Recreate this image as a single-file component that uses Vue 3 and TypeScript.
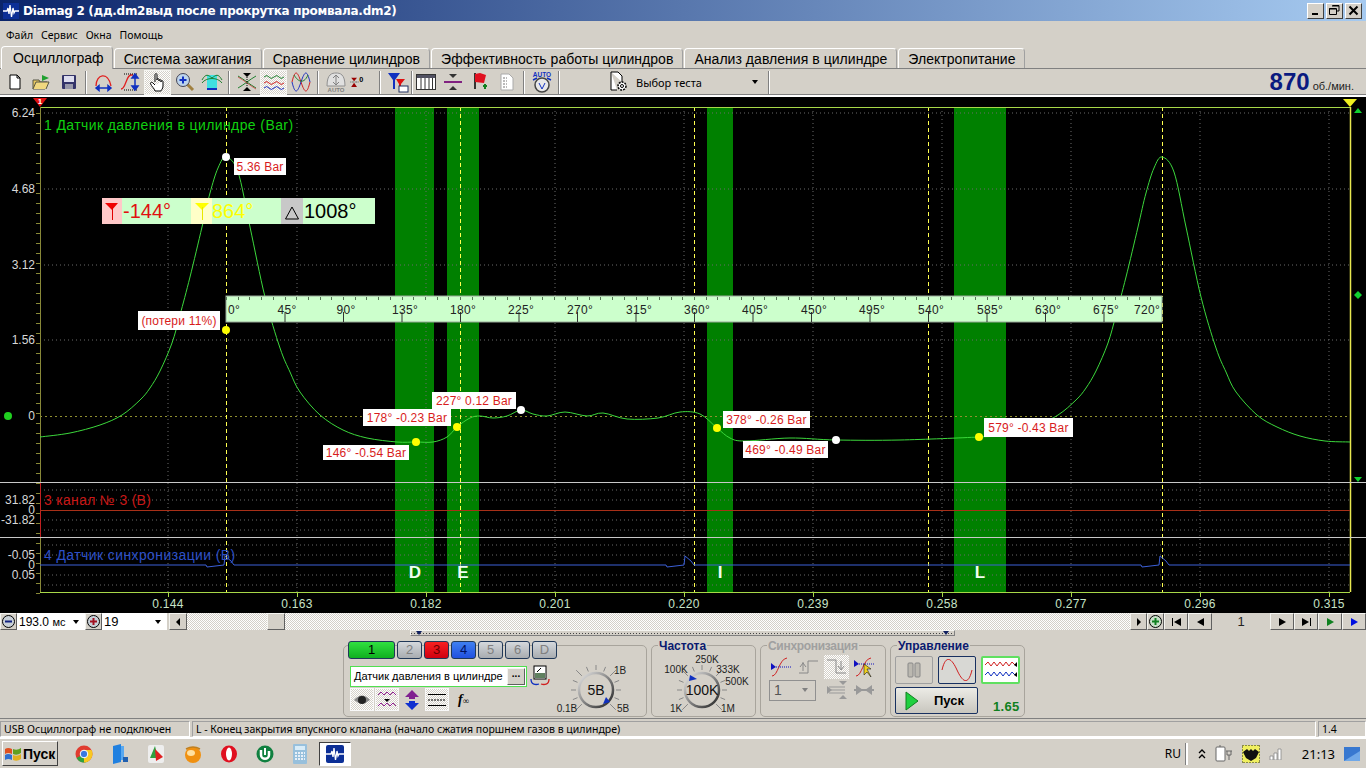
<script setup lang="ts">
interface Chip { x: number; y: number; w: number; h: number; text: string }
interface Dot { x: number; y: number; fill: string }
interface Knob { cx: number; cy: number; r: number; ticks: { x1: number; y1: number; x2: number; y2: number }[] }

const pressure: [number, number][] = [
  [40, 437], [70, 433], [100, 425], [122, 415], [140, 400], [150, 388], [160, 371], [172, 343], [180, 315], [190, 277], [202, 227], [210, 193], [218, 168], [226, 157],
  [238, 172], [250, 227], [265, 297], [280, 348], [290, 372], [300, 392], [320, 415], [343, 430], [367, 438], [397, 442], [416, 442], [433, 442], [447, 437],
  [457, 427], [470, 418], [480, 416], [493, 418], [507, 416], [521, 410], [533, 414], [547, 416], [565, 412], [587, 416], [603, 413], [627, 419],
  [658, 418], [680, 412], [700, 414], [717, 428], [730, 438], [745, 441], [790, 438], [836, 440], [900, 440], [979, 437], [1000, 435], [1036, 425],
  [1058, 415], [1076, 400], [1086, 388], [1096, 371], [1108, 343], [1116, 315], [1126, 277], [1138, 227], [1146, 193], [1154, 168], [1162, 157], [1174, 172], [1186, 227],
  [1201, 297], [1216, 348], [1226, 372], [1236, 392], [1257, 415], [1277, 427], [1300, 436], [1325, 441], [1350, 442]
]

function smooth(pts: [number, number][]): string {
  let d = `M${pts[0][0]} ${pts[0][1]}`
  for (let i = 0; i < pts.length - 1; i++) {
    const p0 = pts[Math.max(0, i - 1)]
    const p1 = pts[i]
    const p2 = pts[i + 1]
    const p3 = pts[Math.min(pts.length - 1, i + 2)]
    const c1x = p1[0] + (p2[0] - p0[0]) / 6
    const c1y = p1[1] + (p2[1] - p0[1]) / 6
    const c2x = p2[0] - (p3[0] - p1[0]) / 6
    const c2y = p2[1] - (p3[1] - p1[1]) / 6
    d += ` C${c1x.toFixed(1)} ${c1y.toFixed(1)} ${c2x.toFixed(1)} ${c2y.toFixed(1)} ${p2[0]} ${p2[1]}`
  }
  return d
}
const curve = smooth(pressure)

const syncPath = (() => {
  const blip = (x: number) => `${x - 19},565 ${x - 18},567 ${x - 1},565 ${x},556 ${x + 6},561 ${x + 9},565`
  return `40,565 ${blip(225)} ${blip(685)} ${blip(1160)} 1350,565`
})()

const gridX = [168, 297, 426, 555, 684, 813, 942, 1071, 1200, 1329]
const timeLabels = ['0.144', '0.163', '0.182', '0.201', '0.220', '0.239', '0.258', '0.277', '0.296', '0.315']
const gridY = [113, 189, 265, 340, 490, 500, 520, 530, 545, 555, 575, 585]
const cursors = [226, 460, 694, 928, 1162]
const bands = [{ x: 395, w: 39 }, { x: 447, w: 32 }, { x: 707, w: 26 }, { x: 954, w: 52 }]
const letters = [{ x: 415, t: 'D' }, { x: 463, t: 'E' }, { x: 720, t: 'I' }, { x: 980, t: 'L' }]
const axis = [
  { y: 113, t: '6.24' }, { y: 189, t: '4.68' }, { y: 265, t: '3.12' }, { y: 340, t: '1.56' }, { y: 416, t: '0' },
  { y: 500, t: '31.82' }, { y: 510, t: '0' }, { y: 520, t: '-31.82' },
  { y: 555, t: '-0.05' }, { y: 565, t: '0' }, { y: 575, t: '0.05' }
]
const axisTicks = Array.from({ length: 49 }, (_, i) => 113 + i * 10)

const chips: Chip[] = [
  { x: 234, y: 158, w: 52, h: 17, text: '5.36 Bar' },
  { x: 138, y: 311, w: 82, h: 19, text: '(потери 11%)' },
  { x: 323, y: 445, w: 86, h: 15, text: '146° -0.54 Bar' },
  { x: 363, y: 409, w: 88, h: 17, text: '178° -0.23 Bar' },
  { x: 432, y: 392, w: 84, h: 17, text: '227° 0.12 Bar' },
  { x: 723, y: 411, w: 87, h: 17, text: '378° -0.26 Bar' },
  { x: 743, y: 441, w: 85, h: 17, text: '469° -0.49 Bar' },
  { x: 984, y: 418, w: 89, h: 19, text: '579° -0.43 Bar' }
]
const dots: Dot[] = [
  { x: 226, y: 157, fill: '#fff' }, { x: 226, y: 330, fill: '#ff0' }, { x: 416, y: 442, fill: '#ff0' }, { x: 457, y: 427, fill: '#ff0' },
  { x: 521, y: 410, fill: '#fff' }, { x: 717, y: 428, fill: '#ff0' }, { x: 836, y: 440, fill: '#fff' }, { x: 979, y: 437, fill: '#ff0' }
]
const rulerLabels = [
  [234, '0°'], [287, '45°'], [346, '90°'], [405, '135°'], [463, '180°'], [521, '225°'], [580, '270°'], [639, '315°'], [697, '360°'],
  [755, '405°'], [814, '450°'], [872, '495°'], [931, '540°'], [990, '585°'], [1048, '630°'], [1106, '675°'], [1147, '720°']
] as [number, string][]
const rulerTicks = Array.from({ length: 81 }, (_, i) => 226 + i * 11.7)

function knob(cx: number, cy: number, r: number, count: number): Knob {
  const ticks = Array.from({ length: count }, (_, i) => {
    const a = ((135 + (270 * i) / (count - 1)) * Math.PI) / 180
    const long = i % Math.floor((count - 1) / 3) === 0
    return {
      x1: cx + Math.cos(a) * (r + 3),
      y1: cy + Math.sin(a) * (r + 3),
      x2: cx + Math.cos(a) * (r + (long ? 11 : 8)),
      y2: cy + Math.sin(a) * (r + (long ? 11 : 8))
    }
  })
  return { cx, cy, r, ticks }
}
const voltKnob = knob(66, 45, 17, 13)
const freqKnob = knob(50, 45, 17, 13)

const tabs = ['Система зажигания', 'Сравнение цилиндров', 'Эффективность работы цилиндров', 'Анализ давления в цилиндре', 'Электропитание']
const channels = [
  { t: '1', c: 'ch-green' }, { t: '2', c: '' }, { t: '3', c: 'ch-red' }, { t: '4', c: 'ch-blue' }, { t: '5', c: '' }, { t: '6', c: '' }, { t: 'D', c: '' }
]
</script>

<template>
  <div class="app">
    <header class="title">
      <svg class="app-icon" width="16" height="16" viewBox="0 0 16 16">
        <rect width="16" height="16" fill="#0c2f96" />
        <path d="M0 8H4L5 5L6 11L7 2L8.500 14L10 5L11 10L12 8H16" fill="none" stroke="#fff" stroke-width="1.300" />
      </svg>
      <span class="title-text">Diamag 2 (дд.dm2выд после прокрутка промвала.dm2)</span>
      <div class="win-btns">
        <div class="win-btn"><svg width="11" height="11"><rect x="2" y="8" width="6" height="2" fill="#000" /></svg></div>
        <div class="win-btn"><svg width="11" height="11"><path d="M3.500 .5H10V6H7.500M.5 3.500H7.500V9.500H.5Z" fill="none" stroke="#000" /><path d="M3 1H10M0 4H7" stroke="#000" /></svg></div>
        <div class="win-btn"><svg width="11" height="11"><path d="M1.500 1.500L9.500 9.500M9.500 1.500L1.500 9.500" stroke="#000" stroke-width="2" /></svg></div>
      </div>
    </header>

    <nav class="menu">
      <span>Файл</span><span>Сервис</span><span>Окна</span><span>Помощь</span>
    </nav>

    <div class="tabs">
      <div class="tab active">Осциллограф</div>
      <div v-for="t in tabs" :key="t" class="tab">{{ t }}</div>
    </div>

    <div class="toolbar">
      <div class="tb"><svg width="18" height="18" viewBox="0 0 18 18"><path d="M4 2H11L14 5V16H4Z" fill="#fff" stroke="#000" /><path d="M11 2V5H14" fill="none" stroke="#000" /></svg></div>
      <div class="tb"><svg width="20" height="18" viewBox="0 0 20 18"><path d="M1 7H7L8 9H15L13 16H1Z" fill="#e8c860" stroke="#554" /><path d="M10 2V8L17 5Z" fill="#20a030" /><path d="M1 16L4 9H17L14 16" fill="#f0d880" stroke="#554" /></svg></div>
      <div class="tb"><svg width="16" height="16" viewBox="0 0 16 16"><rect x="1" y="1" width="14" height="14" rx="1" fill="#34346a" /><rect x="3" y="2" width="10" height="6" fill="#dde" /><rect x="4" y="10" width="8" height="5" fill="#99a" /></svg></div>
      <div class="sep"></div>
      <div class="tb"><svg width="20" height="20" viewBox="0 0 20 20"><path d="M2 14C2 2 14 -1 17 14" fill="none" stroke="#e02020" stroke-width="1.300" /><path d="M2 16H17M2 16L5 13.500V18.500ZM17 16L14 13.500V18.500Z" stroke="#1030c0" fill="#1030c0" stroke-width="1.500" /></svg></div>
      <div class="tb"><svg width="22" height="22" viewBox="0 0 22 22"><path d="M1 18C6 18 6 4 11 4H13" fill="none" stroke="#e02020" stroke-width="1.300" /><path d="M4 3H18M4 19H18" stroke="#000" stroke-dasharray="1 1" /><path d="M15 4V18M15 3L12 7H18ZM15 19L12 15H18Z" stroke="#1030c0" fill="#1030c0" stroke-width="1.500" /></svg></div>
      <div class="tb on"><svg width="18" height="20" viewBox="0 0 18 20"><path d="M6 10V3C6 1 8 1 8 3V8M8 8C8 6 10 6 10 8V9M10 9C10 7 12 7 12 9V10M12 10C12 8 14 8 14 10V14C14 17 12 18 12 19H6C6 17 2 14 1.500 11.500C1.500 10 3 10 4 11L6 13" fill="#fff" stroke="#000" /></svg></div>
      <div class="tb"><svg width="20" height="20" viewBox="0 0 20 20"><path d="M12 12L18 18" stroke="#a08040" stroke-width="3" /><circle cx="8" cy="8" r="6.500" fill="#bcd4ec" stroke="#445" /><path d="M4.500 8H11.500M8 4.500V11.500" stroke="#1030c0" stroke-width="2" /></svg></div>
      <div class="tb"><svg width="22" height="20" viewBox="0 0 22 20"><rect x="6" y="3" width="10" height="14" fill="#40e0e0" /><path d="M1 8C5 1 7 3 11 6C15 3 17 1 21 8M1 11C5 5 17 5 21 11" fill="none" stroke="#208030" /><path d="M6 17H16" stroke="#1030c0" stroke-width="2" /></svg></div>
      <div class="sep"></div>
      <div class="tb"><svg width="22" height="20" viewBox="0 0 22 20"><path d="M2 4C9 8 13 12 20 16M2 16C9 12 13 8 20 4" fill="none" stroke="#208030" /><path d="M2 5C9 9 13 13 20 17" fill="none" stroke="#d03030" stroke-width=".7" /><path d="M11 5V15" stroke="#000" stroke-dasharray="1 1" /><path d="M7 1H15L11 5ZM7 19H15L11 15Z" fill="#000" /></svg></div>
      <div class="tb on"><svg width="22" height="20" viewBox="0 0 22 20"><path d="M1 5Q4 2 6 5T11 5T16 5T21 5" fill="none" stroke="#208030" /><path d="M1 11Q4 8 6 11T11 11T16 11T21 11" fill="none" stroke="#d02020" /><path d="M1 16Q4 13 6 16T11 16T16 16T21 16" fill="none" stroke="#2030c0" /></svg></div>
      <div class="tb"><svg width="20" height="20" viewBox="0 0 20 20"><path d="M1 10C4 -2 6 -2 10 10S16 22 19 10" fill="none" stroke="#d02020" /><path d="M1 10C4 22 6 22 10 10S16 -2 19 10" fill="none" stroke="#2030c0" /><path d="M3 3C6 8 12 14 17 3" fill="none" stroke="#208030" /></svg></div>
      <div class="sep"></div>
      <div class="tb narrow"><svg width="22" height="22" viewBox="0 0 22 22"><path d="M2 15C2 3 7 2 11 2S20 3 20 15Z" fill="#e0e0e0" stroke="#909090" /><path d="M11 5V13M8 7L11 4L14 7M8 11L11 14L14 11" fill="none" stroke="#808080" /><text x="11" y="21" class="mini" fill="#808080">AUTO</text></svg></div>
      <div class="tb narrow2"><svg width="22" height="18" viewBox="0 0 22 18"><path d="M2 9H13" stroke="#000" stroke-dasharray="1 1" /><path d="M3 3H11L7 8ZM3 16H11L7 10Z" fill="#900" /><text x="17" y="9" class="zero">0</text></svg></div>
      <div class="sep"></div>
      <div class="tb"><svg width="22" height="22" viewBox="0 0 22 22"><path d="M1 2H13L8 9V18L6 18V9Z" fill="#1030c0" /><path d="M9 8H18L14 13V18H12V13Z" fill="#e01010" /><rect x="12" y="15" width="9" height="6" fill="#fff" stroke="#203060" /></svg></div>
      <div class="sep tight"></div>
      <div class="tb"><svg width="20" height="18" viewBox="0 0 20 18"><rect x=".5" y="1.500" width="19" height="15" fill="#fff" stroke="#333" /><rect x="1" y="2" width="18" height="3" fill="#505060" /><path d="M5 5V16M9 5V16M13 5V16M16.500 5V16" stroke="#333" /></svg></div>
      <div class="tb"><svg width="20" height="18" viewBox="0 0 20 18"><path d="M1 9H19" stroke="#802080" stroke-width="2" /><path d="M6 1H14L10 5ZM6 17H14L10 13Z" fill="#333" /></svg></div>
      <div class="tb"><svg width="16" height="20" viewBox="0 0 16 20"><path d="M3 1V17" stroke="#000" stroke-width="1.500" /><path d="M3 2L8 1L14 3L12 11L3 10Z" fill="#e01020" /><path d="M11 14H15M13 12V17" stroke="#108020" stroke-width="2" /></svg></div>
      <div class="tb"><svg width="16" height="18" viewBox="0 0 16 18"><path d="M2 1H10L14 5V17H2Z" fill="#fff" stroke="#aaa" /><path d="M4 5H8M4 8H8M4 11H8M4 14H8" stroke="#777" stroke-dasharray="2 1" /></svg></div>
      <div class="sep"></div>
      <div class="tb"><svg width="20" height="22" viewBox="0 0 20 22"><text x="10" y="6" class="mini-b" fill="#1030c0">AUTO</text><circle cx="10" cy="14" r="7" fill="#e8e8e8" stroke="#444" stroke-width="1.500" /><path d="M7 12L10 18L13 12" fill="none" stroke="#1030c0" /><path d="M1 9L5 7M19 9L15 7" stroke="#1030c0" stroke-width="1.500" /></svg></div>
      <div class="sep"></div>
      <div class="test-combo">
        <svg class="gear" width="20" height="22" viewBox="0 0 20 22"><path d="M2 1H9L13 5V11M2 1V19H8" fill="#fff" stroke="#000" /><circle cx="13" cy="15" r="4" fill="#fff" stroke="#000" stroke-dasharray="2 1" stroke-width="1.500" /><circle cx="13" cy="15" r="1.500" fill="none" stroke="#000" /></svg>
        <span class="test-label">Выбор теста</span>
        <span class="arrow-down"></span>
      </div>
      <div class="sep last"></div>
      <div class="rpm"><b>870</b><span>об./мин.</span></div>
    </div>

    <div class="scope">
      <svg width="1366" height="516" viewBox="0 97 1366 516">
        <rect x="0" y="97" width="1366" height="516" fill="#000" />
        <rect v-for="b in bands" :key="b.x" :x="b.x" y="107" :width="b.w" height="485" fill="#008000" />
        <g stroke="#6a6a6a" stroke-dasharray="1 3">
          <line v-for="x in gridX" :key="x" :x1="x" y1="107" :x2="x" y2="592" />
          <line v-for="y in gridY" :key="y" x1="40" :y1="y" x2="1350" :y2="y" />
        </g>
        <line x1="40" y1="416.500" x2="1350" y2="416.500" stroke="#909030" stroke-dasharray="2 3" />
        <line v-for="x in cursors" :key="x" :x1="x + 0.5" y1="107" :x2="x + 0.5" y2="592" stroke="#ffff50" stroke-dasharray="4 3" />

        <line x1="40" y1="107.500" x2="1350" y2="107.500" stroke="#a8d848" />
        <line x1="40" y1="592.500" x2="1350" y2="592.500" stroke="#a8d848" />
        <line x1="40.500" y1="107" x2="40.500" y2="592" stroke="#888838" />
        <line x1="40.500" y1="482" x2="40.500" y2="537" stroke="#c02020" />
        <line v-for="y in axisTicks" :key="y" x1="36" :y1="y + 0.5" x2="40" :y2="y + 0.5" stroke="#888838" />
        <line x1="1350.500" y1="107" x2="1350.500" y2="592" stroke="#e8e850" stroke-width="1.500" />
        <line x1="0" y1="482.500" x2="1366" y2="482.500" stroke="#c8c8c8" />
        <line x1="0" y1="537.500" x2="1366" y2="537.500" stroke="#c8c8c8" />
        <line x1="40" y1="510.500" x2="1350" y2="510.500" stroke="#a83018" />
        <line v-for="x in gridX" :key="'t' + x" :x1="x + 0.5" y1="592" :x2="x + 0.5" y2="597" stroke="#a8d848" />

        <path :d="curve" fill="none" stroke="#3cd83c" stroke-width="1" />
        <polyline :points="syncPath" fill="none" stroke="#3c60d8" />

        <text v-for="a in axis" :key="a.y" x="35" :y="a.y + 4" class="axis-label">{{ a.t }}</text>
        <text v-for="(t, i) in timeLabels" :key="t" :x="gridX[i]" y="608" class="time-label">{{ t }}</text>
        <text v-for="l in letters" :key="l.t" :x="l.x" y="578" class="band-letter">{{ l.t }}</text>

        <text x="44" y="130" class="ch ch1">1 Датчик давления в цилиндре (Bar)</text>
        <text x="44" y="505" class="ch ch3">3 канал № 3 (В)</text>
        <text x="44" y="560" class="ch ch4">4 Датчик синхронизации (В)</text>

        <g>
          <rect x="102" y="198" width="273" height="26" fill="#ccffcc" />
          <rect x="102" y="198" width="20" height="26" fill="#ffc8c8" />
          <rect x="191" y="198" width="21" height="26" fill="#ffffc8" />
          <rect x="281" y="198" width="22" height="26" fill="#c8c8c8" />
          <path d="M105 203H118L112 210Z" fill="#f00000" /><line x1="112.500" y1="207" x2="112.500" y2="220" stroke="#e00000" />
          <path d="M195 203H209L202 210Z" fill="#ffff00" /><line x1="202.500" y1="207" x2="202.500" y2="220" stroke="#e8e800" />
          <path d="M285.500 219L292 207L298.500 219Z" fill="none" stroke="#000" />
          <text x="123" y="218" class="big" fill="#e01010">-144°</text>
          <text x="212" y="218" class="big" fill="#ffff00">864°</text>
          <text x="304" y="218" class="big" fill="#000">1008°</text>
        </g>

        <rect x="226" y="296" width="936" height="26" fill="#ccffcc" />
        <rect x="226" y="296" width="936" height="26" fill="none" stroke="#98a898" />
        <line v-for="x in rulerTicks" :key="x" :x1="Math.round(x) + 0.5" y1="297" :x2="Math.round(x) + 0.5" y2="300" stroke="#557755" />
        <line v-for="l in rulerLabels.slice(1, 16)" :key="'r' + l[1]" :x1="226.500 + rulerLabels.indexOf(l) * 58.500" y1="312" :x2="226.500 + rulerLabels.indexOf(l) * 58.500" y2="322" stroke="#333" />
        <text v-for="l in rulerLabels" :key="l[1]" :x="l[0]" y="314" class="ruler-label">{{ l[1] }}</text>

        <g v-for="c in chips" :key="c.text">
          <rect :x="c.x" :y="c.y" :width="c.w" :height="c.h" fill="#fff" />
          <text :x="c.x + c.w / 2" :y="c.y + c.h / 2 + 4" class="chip-label">{{ c.text }}</text>
        </g>
        <circle v-for="d in dots" :key="d.x + '-' + d.y" :cx="d.x" :cy="d.y" r="4" :fill="d.fill" />

        <circle cx="8" cy="416" r="4" fill="#20d020" />
        <path d="M33 98H47L40 107Z" fill="#e01010" />
        <text x="40" y="104" class="marker">1</text>
        <path d="M1343 99H1357L1350 107Z" fill="#f0f020" />
        <path d="M1354 113L1358 108L1362 113Z" fill="#10d030" />
        <path d="M1358 291L1362 295L1358 299L1354 295Z" fill="#10d030" />
        <path d="M1354 477L1358 482L1362 477Z" fill="#10d030" />
      </svg>
    </div>

    <div class="scroll-row">
      <div class="sq"><svg width="15" height="15"><circle cx="7.500" cy="7.500" r="6" fill="#c8d0d8" stroke="#000" /><path d="M4 7.500H11" stroke="#102080" stroke-width="2" /></svg></div>
      <div class="combo c1"><span>193.0 <small>мс</small></span><i class="arrow-down"></i></div>
      <div class="sq"><svg width="15" height="15"><circle cx="7.500" cy="7.500" r="6" fill="#c8d0d8" stroke="#000" /><path d="M4 7.500H11M7.500 4V11" stroke="#a01020" stroke-width="2" /></svg></div>
      <div class="combo c2"><span>19</span><i class="arrow-down"></i></div>
      <div class="sq wide"><i class="tri-l"></i></div>
      <div class="track"><div class="thumb"></div></div>
      <div class="sq"><i class="tri-r"></i></div>
      <div class="sq"><svg width="15" height="15"><circle cx="7.500" cy="7.500" r="6" fill="#c8e0c8" stroke="#000" /><path d="M4 7.500H11M7.500 4V11" stroke="#108020" stroke-width="2" /></svg></div>
      <div class="sq nav"><b class="bar"></b><i class="tri-l big-tri"></i></div>
      <div class="sq nav"><i class="tri-l big-tri"></i></div>
      <div class="page">1</div>
      <div class="sq nav"><i class="tri-r big-tri"></i></div>
      <div class="sq nav"><i class="tri-r big-tri"></i><b class="bar"></b></div>
      <div class="sq nav"><i class="tri-r big-tri green"></i></div>
      <div class="sq nav"><i class="tri-r big-tri blue"></i></div>
    </div>

    <div class="panel-area">
      <div class="splitter"><i class="mark"></i><i class="mark"></i></div>
      <div class="panels">
        <section class="group g-channel">
          <div class="ch-btns">
            <div v-for="c in channels" :key="c.t" class="ch-btn" :class="c.c">{{ c.t }}</div>
          </div>
          <div class="ch-body">
            <div class="ch-left">
              <div class="ch-input-row">
                <div class="ch-input"><span>Датчик давления в цилиндре</span><div class="dots">...</div></div>
                <svg width="20" height="22" viewBox="0 0 20 22"><rect x="4" y="1" width="12" height="13" fill="#fff" stroke="#000" /><rect x="5" y="8" width="10" height="5" fill="#608060" /><path d="M7 7L11 3" stroke="#000" /><path d="M1 14C1 20 6 20 9 19" fill="none" stroke="#1030c0" stroke-width="1.300" /><path d="M19 14C19 20 14 20 11 19" fill="none" stroke="#d02020" stroke-width="1.300" /></svg>
              </div>
              <div class="ch-tools">
                <div class="ct on"><svg width="18" height="12" viewBox="0 0 18 12"><path d="M1 6Q9 -3 17 6Q9 13 1 6Z" fill="#888" /><circle cx="9" cy="6" r="4" fill="#222" /></svg></div>
                <div class="ct on"><svg width="20" height="18" viewBox="0 0 20 18"><path d="M1 4L4 1L7 4L10 1L13 4L16 1L19 4" fill="none" stroke="#902090" /><path d="M7 8H13L10 11Z" fill="#000" /><path d="M1 15L4 12L7 15L10 12L13 15L16 12L19 15" fill="none" stroke="#902090" /></svg></div>
                <div class="ct"><svg width="16" height="20" viewBox="0 0 16 20"><path d="M8 0L15 7H11V9H5V7H1Z" fill="#802090" /><path d="M8 20L15 13H11V11H5V13H1Z" fill="#1030d0" /></svg></div>
                <div class="ct on"><svg width="20" height="14" viewBox="0 0 20 14"><path d="M1 1.500H19M1 12.500H19" stroke="#000" /><path d="M1 7H19" stroke="#000" stroke-dasharray="2 1" /></svg></div>
                <div class="fx">f<small>∞</small></div>
              </div>
            </div>
            <svg class="knob" width="104" height="70" viewBox="0 0 104 70">
              <defs>
                <linearGradient id="ringA" x1="0" y1="0" x2="1" y2="1"><stop offset="0" stop-color="#e8e8e8" /><stop offset="1" stop-color="#222" /></linearGradient>
              </defs>
              <line v-for="(t, i) in voltKnob.ticks" :key="i" :x1="t.x1" :y1="t.y1" :x2="t.x2" :y2="t.y2" stroke="#888" />
              <circle :cx="voltKnob.cx" :cy="voltKnob.cy" r="17" fill="#d4d0c8" stroke="url(#ringA)" stroke-width="2.500" />
              <path d="M80 57L73 59L76 52Z" fill="#1030c0" />
              <text :x="voltKnob.cx" y="50" class="knob-val">5В</text>
              <text x="37" y="67" class="knob-l">0.1В</text>
              <text x="90" y="29" class="knob-l">1В</text>
              <text x="93" y="67" class="knob-l">5В</text>
            </svg>
          </div>
        </section>

        <section class="group g-freq">
          <div class="legend">Частота</div>
          <svg class="knob" width="102" height="70" viewBox="0 0 102 70">
            <defs>
              <linearGradient id="ringB" x1="0" y1="0" x2="1" y2="1"><stop offset="0" stop-color="#e8e8e8" /><stop offset="1" stop-color="#222" /></linearGradient>
            </defs>
            <line v-for="(t, i) in freqKnob.ticks" :key="i" :x1="t.x1" :y1="t.y1" :x2="t.x2" :y2="t.y2" stroke="#888" />
            <circle :cx="freqKnob.cx" :cy="freqKnob.cy" r="17" fill="#d4d0c8" stroke="url(#ringB)" stroke-width="2.500" />
            <path d="M38 30L45 34L37 36Z" fill="#1030c0" />
            <text :x="freqKnob.cx" y="50" class="knob-val">100K</text>
            <text x="55" y="18" class="knob-l">250K</text>
            <text x="24" y="28" class="knob-l">100K</text>
            <text x="76" y="28" class="knob-l">333K</text>
            <text x="85" y="40" class="knob-l">500K</text>
            <text x="24" y="67" class="knob-l">1K</text>
            <text x="76" y="67" class="knob-l">1M</text>
          </svg>
        </section>

        <section class="group g-sync">
          <div class="legend off">Синхронизация</div>
          <div class="sync-row">
            <div class="si"><svg width="22" height="20" viewBox="0 0 22 20"><path d="M2 19C8 19 9 2 17 1" fill="none" stroke="#d02020" /><path d="M1 6L6 10L1 13Z" fill="#1010c0" /><path d="M6 10H22" stroke="#1010c0" stroke-dasharray="1 1" /></svg></div>
            <div class="si"><svg width="22" height="20" viewBox="0 0 22 20"><path d="M1 16H10V4H20" fill="none" stroke="#888" /><path d="M5 5V14M2 10L5 6L8 10" fill="none" stroke="#888" /></svg></div>
            <div class="si on"><svg width="22" height="20" viewBox="0 0 22 20"><path d="M1 3H10V16H20" fill="none" stroke="#888" /><path d="M15 4V12M12 9L15 13L18 9" fill="none" stroke="#888" /></svg></div>
            <div class="si"><svg width="24" height="22" viewBox="0 0 24 22"><path d="M3 20C9 20 10 3 18 2" fill="none" stroke="#d02020" /><path d="M1 4L6 8L1 11Z" fill="#1010c0" /><path d="M6 8H22" stroke="#1010c0" stroke-dasharray="1 1" /><path d="M11 8V19L14 16L18 21L14 13H18Z" fill="#f0d020" stroke="#000" stroke-width=".5" /></svg></div>
          </div>
          <div class="sync-row r2">
            <div class="sync-sel"><span>1</span><i class="arrow-down gray"></i></div>
            <div class="si"><svg width="22" height="20" viewBox="0 0 22 20"><path d="M3 7H19M3 10H19M3 13H19" stroke="#999" /><path d="M13 1H21L17 5ZM13 19H21L17 15Z" fill="#999" /><path d="M1 6L6 10L1 14Z" fill="#999" /></svg></div>
            <div class="si"><svg width="22" height="14" viewBox="0 0 22 14"><path d="M1 7H21" stroke="#999" stroke-width="2" /><path d="M3 2L10 7L3 12ZM19 2L12 7L19 12Z" fill="#999" /></svg></div>
          </div>
        </section>

        <section class="group g-ctrl">
          <div class="legend">Управление</div>
          <div class="ctrl-grid">
            <div class="cb pause"><svg width="14" height="16"><rect x="1" y="1" width="5" height="14" rx="1" fill="#bbb8b0" stroke="#888" /><rect x="8" y="1" width="5" height="14" rx="1" fill="#bbb8b0" stroke="#888" /></svg></div>
            <div class="cb sine"><svg width="32" height="22" viewBox="0 0 32 22"><path d="M1 11C5 -6 11 0 16 11S27 28 31 11" fill="none" stroke="#d02020" /></svg></div>
            <div class="cb wave"><svg width="34" height="20" viewBox="0 0 34 20"><path d="M1 5L4 2L7 6L10 2L13 6L16 2L19 6L22 2L25 6L28 2L31 5" fill="none" stroke="#d02020" /><path d="M1 15L4 12L7 16L10 12L13 16L16 12L19 16L22 12L25 16L28 12L31 15" fill="none" stroke="#1030c0" /><path d="M33 2L30 5L33 7Z" fill="#000" /><path d="M33 12L30 15L33 17Z" fill="#000" /></svg></div>
            <div class="start"><svg width="14" height="20"><path d="M1 1L13 10L1 19Z" fill="#20d040" stroke="#108020" /></svg><span>Пуск</span></div>
            <div class="volts">1.65</div>
          </div>
        </section>
      </div>
    </div>

    <footer class="status">
      <div class="st s1">USB Осциллограф не подключен</div>
      <div class="st s2">L - Конец закрытия впускного клапана (начало сжатия поршнем газов в цилиндре)</div>
      <div class="st s3">1.4</div>
    </footer>

    <div class="taskbar">
      <div class="start-btn">
        <svg width="18" height="16" viewBox="0 0 18 16"><path d="M1 3Q4 1 8 3V8Q4 6 1 8Z" fill="#e05020" /><path d="M9 3Q13 5 17 2V7Q13 10 9 8Z" fill="#60a020" /><path d="M1 9Q4 7 8 9V14Q4 12 1 14Z" fill="#3070d0" /><path d="M9 9Q13 11 17 8V13Q13 16 9 14Z" fill="#e0b020" /></svg>
        <b>Пуск</b>
      </div>
      <div class="apps">
        <svg width="18" height="18" viewBox="0 0 18 18"><circle cx="9" cy="9" r="8.500" fill="#e03c30" /><path d="M9 9L1.500 13A8.500 8.500 0 0 0 13 16.500Z" fill="#30a040" /><path d="M9 5H16.500A8.500 8.500 0 0 1 9 17.500Z" fill="#f8c820" /><circle cx="9" cy="9" r="3.800" fill="#3878e0" stroke="#fff" /></svg>
        <svg width="16" height="20" viewBox="0 0 16 20"><path d="M1 2L9 0V18L1 20Z" fill="#2080e0" /><path d="M9 2H12V16H9Z" fill="#58a8f0" /><rect x="11" y="13" width="5" height="5" fill="#2060b0" /></svg>
        <svg width="18" height="20" viewBox="0 0 18 20"><rect x="1" y="1" width="16" height="18" rx="2" fill="#eee" /><path d="M3 14L8 2L11 14Z" fill="#30a040" /><path d="M8 5L16 13L9 17Z" fill="#e02020" /></svg>
        <svg width="18" height="18" viewBox="0 0 18 18"><circle cx="9" cy="10" r="8" fill="#f09010" /><ellipse cx="7" cy="8" rx="4" ry="3" fill="#ffe0a0" /><path d="M2 4Q9 0 16 4" fill="none" stroke="#c08020" stroke-width="1.500" /></svg>
        <svg width="16" height="18" viewBox="0 0 16 18"><ellipse cx="8" cy="9" rx="8" ry="8.500" fill="#e01020" /><ellipse cx="8" cy="9" rx="3" ry="6.500" fill="#fff" /></svg>
        <svg width="18" height="18" viewBox="0 0 18 18"><circle cx="9" cy="9" r="8.500" fill="#108040" /><path d="M5 5V10C5 15 13 15 13 10V6" fill="none" stroke="#fff" stroke-width="2.500" /><path d="M9 3V10" stroke="#fff" stroke-width="2" /></svg>
        <svg width="14" height="20" viewBox="0 0 14 20"><rect width="14" height="20" rx="1" fill="#98c0dc" /><rect x="2" y="2" width="10" height="4" fill="#d8ecf8" /><path d="M2 9H12M2 12H12M2 15H12" stroke="#e8f0f8" stroke-width="2" stroke-dasharray="2 1" /></svg>
        <div class="active-app"><svg width="18" height="18" viewBox="0 0 18 18"><rect width="18" height="18" rx="2" fill="#0c2f96" /><path d="M0 9H5L6 6L7 12L8 3L9.500 15L11 6L12 11L13 9H18" fill="none" stroke="#fff" stroke-width="1.300" /></svg></div>
      </div>
      <div class="tray">
        <span class="lang">RU</span>
        <div class="tray-box">
          <svg width="8" height="10" viewBox="0 0 8 10"><path d="M1 4L4 1L7 4M1 9L4 6L7 9" fill="none" stroke="#000" stroke-width="1.300" /></svg>
          <svg width="18" height="18" viewBox="0 0 18 18"><rect x="1" y="2" width="9" height="14" rx="1" fill="#fff" stroke="#666" /><path d="M5 2V0M11 6H17M12 6V10H16V6M14 10V15" fill="none" stroke="#666" /></svg>
          <svg class="bat" width="18" height="18" viewBox="0 0 18 18"><rect width="18" height="18" fill="#f0f060" stroke="#223" stroke-dasharray="2 1" /><path d="M1 7L5 4L7 6L9 4L11 6L13 4L17 7L14 13L9 16L4 13Z" fill="#111" /></svg>
          <svg width="14" height="12" viewBox="0 0 14 12"><path d="M1 8H4V12H1ZM5 5H8V12H5ZM9 1H12V12H9Z" fill="#fff" stroke="#888" stroke-width=".8" /></svg>
          <span class="clock">21:13</span>
          <svg width="16" height="14" viewBox="0 0 16 14"><rect width="16" height="14" fill="#3878d0" /><path d="M0 14L16 4V14Z" fill="#70a8e8" /></svg>
        </div>
      </div>
    </div>
  </div>
</template>

<style>
html, body { margin: 0; padding: 0; background: #d4d0c8; overflow: hidden; }
</style>

<style scoped>
.app {
  width: 1366px;
  height: 768px;
  display: flex;
  flex-direction: column;
  background: #d4d0c8;
  font-family: "Liberation Sans", Arial, sans-serif;
  color: #000;
  overflow: hidden;
}

.title {
  height: 21px;
  flex: none;
  display: flex;
  align-items: center;
  padding: 0 4px 0 3px;
  background: linear-gradient(90deg, #0a246a 0%, #a6caf0 100%);
}
.app-icon { flex: none; }
.title-text {
  margin-left: 4px;
  font: bold 12px "DejaVu Sans", sans-serif;
  letter-spacing: -0.3px;
  color: #fff;
  white-space: nowrap;
}
.win-btns { margin-left: auto; display: flex; gap: 2px; }
.win-btn {
  width: 17px;
  height: 16px;
  background: #d4d0c8;
  border: 1px solid;
  border-color: #fff #404040 #404040 #fff;
  box-sizing: border-box;
  display: flex;
  align-items: center;
  justify-content: center;
}

.menu {
  height: 25px;
  flex: none;
  display: flex;
  align-items: center;
  gap: 8px;
  padding: 3px 0 0 6px;
  box-sizing: border-box;
  font: 10.500px "Noto Sans", sans-serif;
}

.tabs {
  height: 22px;
  flex: none;
  display: flex;
  align-items: flex-end;
  padding-left: 1px;
  border-bottom: 1px solid #808080;
  box-sizing: content-box;
}
.tab {
  height: 19px;
  padding: 0 9px;
  margin-right: 1px;
  display: flex;
  align-items: center;
  font-size: 14px;
  letter-spacing: 0.04px;
  border: 1px solid #a0a0a0;
  border-bottom: none;
  border-top-color: #fff;
  border-left-color: #fff;
  border-radius: 4px 4px 0 0;
  white-space: nowrap;
}
.tab.active {
  height: 22px;
  padding: 0 8px 0 11px;
  margin-bottom: -1px;
  background: #d4d0c8;
  position: relative;
}

.toolbar {
  height: 26px;
  flex: none;
  display: flex;
  align-items: center;
  padding-left: 1px;
  border-bottom: 2px solid #fff;
  box-shadow: inset 0 -1px 0 #808080;
}
.tb {
  width: 27px;
  height: 25px;
  flex: none;
  display: flex;
  align-items: center;
  justify-content: center;
  box-sizing: border-box;
}
.tb.narrow { width: 27px; }
.tb.narrow2 { width: 16px; margin-right: 11px; overflow: visible; }
.tb.on {
  background: repeating-conic-gradient(#fff 0 25%, #d4d0c8 0 50%) 0 0 / 2px 2px;
  border: 1px solid #f4f4f0;
}
.sep {
  width: 8px;
  height: 23px;
  flex: none;
  position: relative;
}
.sep::before {
  content: "";
  position: absolute;
  left: 3px;
  top: 0;
  bottom: 0;
  width: 1px;
  background: #808080;
  box-shadow: 1px 0 0 #fff;
}
.sep.tight { width: 1px; }
.sep.tight::before { left: 0; }
.test-combo {
  width: 202px;
  flex: none;
  height: 25px;
  display: flex;
  align-items: center;
  padding-left: 46px;
  box-sizing: border-box;
}
.gear { flex: none; }
.test-label {
  margin-left: 7px;
  font: 11px "Noto Sans", sans-serif;
}
.arrow-down {
  display: inline-block;
  width: 0;
  height: 0;
  border: 3.5px solid transparent;
  border-top: 4px solid #000;
  border-bottom: 0;
}
.test-combo .arrow-down { margin-left: 50px; }
.arrow-down.gray { border-top-color: #808080; }
.sep.last { width: 6px; }
.rpm {
  margin-left: auto;
  display: flex;
  align-items: baseline;
  gap: 3px;
  padding-right: 12px;
}
.rpm b { font-size: 24px; color: #0a1a80; }
.rpm span { font-size: 11px; color: #222; }

.scope { height: 516px; flex: none; }
.scope svg { display: block; }
.axis-label { font-size: 12px; fill: #d8d8d8; text-anchor: end; }
.time-label { font-size: 12px; fill: #c8e4c8; text-anchor: middle; letter-spacing: 0.3px; }
.band-letter { font-size: 17px; font-weight: bold; fill: #f0fff0; text-anchor: middle; }
.ch { font-size: 14px; letter-spacing: 0.4px; }
.ch1 { fill: #10d010; }
.ch3 { fill: #c81818; letter-spacing: 0.3px; }
.ch4 { fill: #2c50c8; }
.big { font-size: 20px; }
.ruler-label { font-size: 12px; fill: #222; text-anchor: middle; letter-spacing: 0.3px; }
.chip-label { font-size: 12px; fill: #d81c1c; text-anchor: middle; letter-spacing: 0.2px; }
.marker { font-size: 8px; font-weight: bold; fill: #fff; text-anchor: middle; }
.mini { font-size: 6px; font-weight: bold; text-anchor: middle; }
.mini-b { font-size: 6.500px; font-weight: bold; text-anchor: middle; }
.zero { font-size: 10px; font-weight: bold; text-anchor: middle; }

.scroll-row {
  height: 17px;
  flex: none;
  display: flex;
  align-items: stretch;
}
.sq {
  width: 17px;
  flex: none;
  background: #d4d0c8;
  border: 1px solid;
  border-color: #f4f4f0 #606060 #606060 #f4f4f0;
  box-sizing: border-box;
  display: flex;
  align-items: center;
  justify-content: center;
  gap: 1px;
}
.sq.wide { width: 18px; margin-left: 2px; }
.sq.nav { width: 24px; }
.combo {
  background: #fff;
  display: flex;
  align-items: center;
  justify-content: space-between;
  padding: 0 6px 0 2px;
  box-sizing: border-box;
  font-size: 12px;
  white-space: nowrap;
}
.combo small { font-size: 11px; }
.c1 { width: 68px; }
.c2 { width: 65px; font-size: 13px; }
.tri-l, .tri-r { display: block; width: 0; height: 0; border: 4px solid transparent; }
.tri-l { border-right: 4px solid #000; border-left: 0; }
.tri-r { border-left: 4px solid #000; border-right: 0; }
.tri-l.big-tri { border-width: 4px 7px 4px 0; border-right-color: #000; }
.tri-r.big-tri { border-width: 4px 0 4px 7px; border-left-color: #000; }
.tri-r.green { border-left-color: #108020; }
.tri-r.blue { border-left-color: #0010e0; }
.bar { width: 1px; height: 8px; background: #000; }
.track {
  flex: 1;
  background: repeating-conic-gradient(#fff 0 25%, #d4d0c8 0 50%) 0 0 / 2px 2px;
  position: relative;
}
.thumb {
  position: absolute;
  left: 80px;
  top: 0;
  width: 18px;
  height: 17px;
  background: #d4d0c8;
  border: 1px solid;
  border-color: #f4f4f0 #606060 #606060 #f4f4f0;
  box-sizing: border-box;
}
.page {
  width: 58px;
  flex: none;
  text-align: center;
  font-size: 13px;
  line-height: 17px;
  color: #222;
}

.panel-area {
  height: 88px;
  flex: none;
  display: flex;
  flex-direction: column;
  align-items: center;
}
.splitter {
  width: 545px;
  height: 6px;
  margin-left: -1px;
  flex: none;
  display: flex;
  align-items: center;
  justify-content: space-between;
  padding: 0 5px;
  box-sizing: border-box;
  background: repeating-linear-gradient(90deg, #444 0 1px, transparent 1px 3px) center / 100% 1px no-repeat;
  border: 1px solid #f4f4f0;
  border-right-color: #808080;
  border-bottom-color: #808080;
}
.mark { width: 0; height: 0; border: 3px solid transparent; border-top: 4px solid #102060; border-bottom: 0; }
.panels {
  width: 100%;
  display: flex;
  padding: 9px 0 0 343px;
  box-sizing: border-box;
  gap: 4px;
}
.group {
  position: relative;
  height: 72px;
  border: 1px solid #a8a49c;
  border-radius: 5px;
  box-sizing: border-box;
  flex: none;
}
.legend {
  position: absolute;
  left: 6px;
  top: -7px;
  padding: 0 1px;
  background: #d4d0c8;
  font-size: 12px;
  line-height: 14px;
  font-weight: bold;
  color: #0a1a70;
}
.legend.off { color: #a0a0a0; letter-spacing: -0.3px; }
.g-channel { width: 304px; }
.ch-btns {
  display: flex;
  gap: 2px;
  margin: -5px 0 0 4px;
}
.ch-btn {
  width: 25px;
  height: 18px;
  border: 1px solid #203858;
  border-radius: 3px;
  box-sizing: border-box;
  background: linear-gradient(#d4d8dc, #a8acb0);
  color: #808080;
  font-size: 13px;
  line-height: 16px;
  text-align: center;
}
.ch-green { width: 47px; background: linear-gradient(#30e040, #10b020); color: #000; }
.ch-red { background: linear-gradient(#f82020, #d00010); color: #600; }
.ch-blue { background: linear-gradient(#4080f0, #2050e0); color: #001060; }
.ch-body { display: flex; margin-top: 6px; }
.ch-left { width: 206px; padding-left: 6px; box-sizing: border-box; flex: none; }
.ch-input-row { display: flex; align-items: center; gap: 3px; width: 202px; }
.ch-input {
  width: 177px;
  height: 21px;
  flex: none;
  display: flex;
  align-items: center;
  justify-content: space-between;
  background: #fff;
  border: 1px solid #50e050;
  box-sizing: border-box;
  padding: 0 1px 0 3px;
  font-size: 11px;
  white-space: nowrap;
}
.dots {
  width: 18px;
  height: 17px;
  background: #d4d0c8;
  border: 1px solid;
  border-color: #f4f4f0 #606060 #606060 #f4f4f0;
  box-sizing: border-box;
  font-size: 10px;
  font-weight: bold;
  line-height: 10px;
  text-align: center;
}
.ch-tools { display: flex; align-items: center; gap: 1px; margin-top: 1px; }
.ct { width: 24px; height: 23px; display: flex; align-items: center; justify-content: center; box-sizing: border-box; flex: none; }
.ct.on {
  background: repeating-conic-gradient(#fff 0 25%, #d4d0c8 0 50%) 0 0 / 2px 2px;
  border: 1px solid #f8f8f8;
}
.fx { margin-left: 8px; font: italic bold 14px "Liberation Serif", serif; }
.fx small { font-size: 9px; }
.knob { display: block; flex: none; }
.ch-body .knob { margin: -20px 0 0 -20px; }
.knob-val { font-size: 14px; text-anchor: middle; fill: #111; }
.knob-l { font-size: 10px; text-anchor: middle; fill: #222; }
.g-freq { width: 105px; }
.g-freq .knob { margin-top: -1px; }
.g-sync { width: 126px; }
.sync-row { display: flex; justify-content: flex-start; align-items: center; padding: 9px 0 0 7px; gap: 3px; }
.si { width: 25px; height: 24px; display: flex; align-items: center; justify-content: center; flex: none; }
.si.on { background: repeating-conic-gradient(#fff 0 25%, #d4d0c8 0 50%) 0 0 / 2px 2px; }
.sync-row.r2 { padding-top: 0; margin-top: -1px; padding-left: 8px; gap: 2px; }
.sync-sel {
  width: 47px;
  height: 21px;
  border: 1px solid #909090;
  box-sizing: border-box;
  display: flex;
  align-items: center;
  justify-content: space-between;
  padding: 0 7px 0 4px;
  font-size: 14px;
  color: #555;
  margin-right: 6px;
}
.g-ctrl { width: 135px; }
.ctrl-grid {
  display: grid;
  grid-template-columns: 38px 38px 39px;
  grid-template-rows: 28px 27px;
  column-gap: 5px;
  row-gap: 3px;
  padding: 10px 0 0 4px;
}
.cb {
  display: flex;
  align-items: center;
  justify-content: center;
  box-sizing: border-box;
  border-radius: 2px;
}
.pause { border: 1px solid #a0a0a0; }
.sine { border: 1px solid #183060; background: #d8d8d4; }
.wave { border: 2px solid #60e060; background: #fff; }
.start {
  grid-column: 1 / 3;
  width: 83px;
  display: flex;
  align-items: center;
  padding-left: 9px;
  gap: 15px;
  box-sizing: border-box;
  border: 1px solid #183060;
  border-radius: 2px;
  background: linear-gradient(#ecebe6, #c8c6be);
  font-size: 13px;
  font-weight: bold;
}
.volts {
  font-size: 13px;
  font-weight: bold;
  color: #108020;
  align-self: end;
  padding: 0 0 0 12px;
  letter-spacing: 0.3px;
}

.status {
  height: 21px;
  flex: none;
  display: flex;
  gap: 2px;
  padding-top: 2px;
  box-sizing: border-box;
  border-top: 1px solid #808080;
  border-bottom: 2px solid #fff;
}
.st {
  box-sizing: border-box;
  border: 1px solid;
  border-color: #a0a0a0 #fff #fff #a0a0a0;
  padding-left: 3px;
  font: 10.500px/15px "Noto Sans", sans-serif;
  white-space: nowrap;
}
.s1 { width: 190px; }
.s2 { flex: 1; }
.s3 { width: 48px; }

.taskbar {
  flex: 1;
  display: flex;
  align-items: center;
  padding: 0 3px 0 2px;
}
.start-btn {
  width: 56px;
  height: 25px;
  box-sizing: border-box;
  border: 1px solid;
  border-color: #fff #404040 #404040 #fff;
  display: flex;
  align-items: center;
  gap: 1px;
  padding-left: 1px;
}
.start-btn b { font-size: 14px; }
.apps {
  display: flex;
  align-items: center;
  gap: 19px;
  margin-left: 17px;
}
.active-app {
  width: 32px;
  height: 24px;
  box-sizing: border-box;
  border: 1px solid;
  border-color: #404040 #fff #fff #404040;
  background: #fff;
  display: flex;
  align-items: center;
  justify-content: center;
  margin-left: -7px;
}
.tray { margin-left: auto; display: flex; align-items: center; }
.lang { font: 12px "Noto Sans", sans-serif; margin-right: 4px; }
.tray-box {
  width: 177px;
  height: 22px;
  box-sizing: border-box;
  border-left: 2px solid #fff;
  box-shadow: -1px 0 0 #808080;
  margin-left: 1px;
  padding: 0 3px 0 10px;
  display: flex;
  align-items: center;
  justify-content: space-between;
}
.clock { font: 13px "Noto Sans", sans-serif; margin-left: 10px; }
</style>
